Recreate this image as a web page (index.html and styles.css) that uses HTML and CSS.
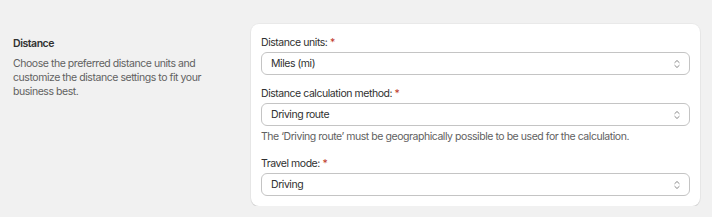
FILE: index.html
```html
<!DOCTYPE html>
<html lang="en">
<head>
  <meta charset="UTF-8">
  <title>Distance settings</title>
  <link rel="stylesheet" href="styles.css">
</head>
<body>
  <div class="layout">
    <div class="intro">
      <h2>Distance</h2>
      <p>Choose the preferred distance units and customize the distance settings to fit your business best.</p>
    </div>
    <div class="card">
      <div class="field">
        <label>Distance units: <span class="req">*</span></label>
        <div class="select">
          <span>Miles (mi)</span>
          <svg width="8" height="10" viewBox="0 0 8 10"><path d="M1.8 3.6L4 1.5l2.2 2.1M1.8 6.4L4 8.5l2.2-2.1" fill="none" stroke="#8a8a8a" stroke-width="1" stroke-linecap="round" stroke-linejoin="round"/></svg>
        </div>
      </div>
      <div class="field">
        <label>Distance calculation method: <span class="req">*</span></label>
        <div class="select">
          <span>Driving route</span>
          <svg width="8" height="10" viewBox="0 0 8 10"><path d="M1.8 3.6L4 1.5l2.2 2.1M1.8 6.4L4 8.5l2.2-2.1" fill="none" stroke="#8a8a8a" stroke-width="1" stroke-linecap="round" stroke-linejoin="round"/></svg>
        </div>
        <p class="help">The ‘Driving route’ must be geographically possible to be used for the calculation.</p>
      </div>
      <div class="field">
        <label>Travel mode: <span class="req">*</span></label>
        <div class="select">
          <span>Driving</span>
          <svg width="8" height="10" viewBox="0 0 8 10"><path d="M1.8 3.6L4 1.5l2.2 2.1M1.8 6.4L4 8.5l2.2-2.1" fill="none" stroke="#8a8a8a" stroke-width="1" stroke-linecap="round" stroke-linejoin="round"/></svg>
        </div>
      </div>
    </div>
  </div>
</body>
</html>
```

FILE: styles.css
```css
body {
  margin: 0;
  background: #f1f1f1;
  font-family: Inter, "Noto Sans", sans-serif;
  font-size: 10.5px;
  letter-spacing: -0.45px;
  color: #303030;
}
.layout {
  display: flex;
  padding: 24px 12px 0 13px;
}
.intro {
  width: 238px;
  padding-top: 13px;
}
.intro h2 {
  margin: 0 0 6px;
  font-size: 10.5px;
  font-weight: 600;
  line-height: 14px;
}
.intro p {
  margin: 0;
  width: 200px;
  line-height: 14px;
  color: #616161;
}
.card {
  flex: 1;
  background: white;
  border-radius: 8px;
  box-shadow: 0 1px 1px rgba(0,0,0,0.12), 0 0 0 1px rgba(0,0,0,0.03);
  padding: 12px 10px 10px;
  display: flex;
  flex-direction: column;
  gap: 12px;
}
.field label {
  display: block;
  line-height: 14px;
  margin-bottom: 2px;
}
.req { color: #c0392b; }
.select {
  height: 23px;
  box-sizing: border-box;
  border: 1px solid #c4c4c4;
  border-radius: 6px;
  display: flex;
  align-items: center;
  justify-content: space-between;
  padding: 0 8px 0 9px;
}
.help {
  margin: 4px 0 1px;
  line-height: 14px;
  color: #616161;
}
```
